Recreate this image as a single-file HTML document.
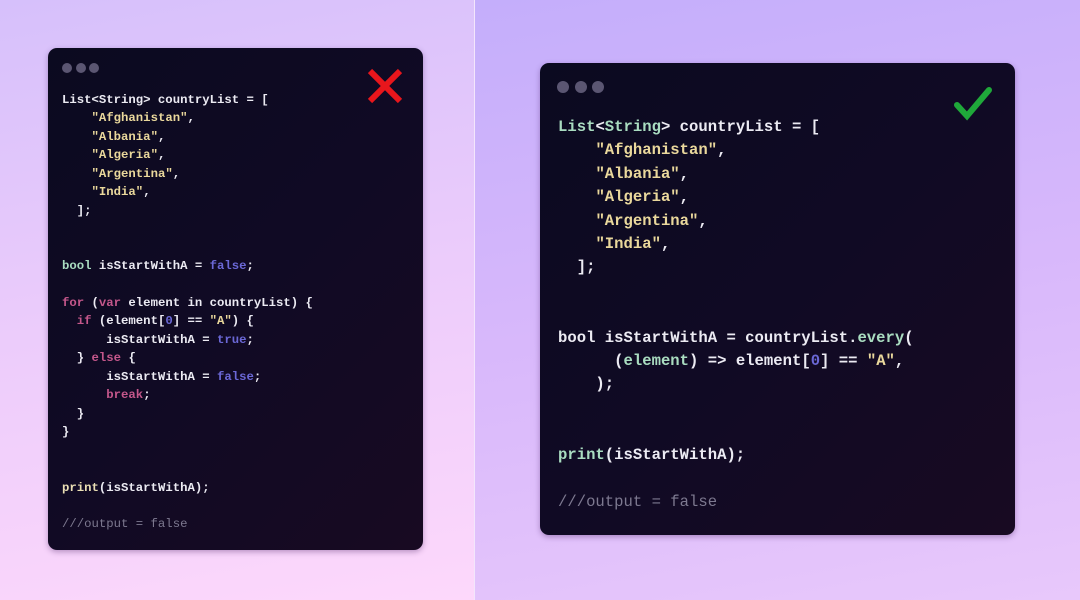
<!DOCTYPE html>
<html><head><style>
body{margin:0;width:1080px;height:600px;position:relative;overflow:hidden;font-family:"Liberation Mono",monospace}
.l{position:absolute;left:0;top:0;width:474px;height:600px;background:linear-gradient(170deg,#d6c0fb 0%,#ecccfb 50%,#fdd8fb 100%)}
.r{position:absolute;left:475px;top:0;width:605px;height:600px;background:linear-gradient(170deg,#c4aefb 0%,#d8b8fb 50%,#e8c8fb 100%)}
.div{position:absolute;left:474px;top:0;width:1px;height:600px;background:#f3e6fb}
.card{position:absolute;border-radius:9px;background:linear-gradient(135deg,#0b0a20 0%,#100a24 50%,#180a22 100%);box-shadow:0 2px 6px rgba(60,20,90,.35)}
.dot{position:absolute;border-radius:50%;background:#5b5672}
pre{margin:0;position:absolute;font-family:"Liberation Mono",monospace;color:#ecebf3;font-weight:bold}
.s{color:#ead89c}.k{color:#c4578b}.b{color:#6b68d6}.g{color:#a9dcc0}.p{color:#eadfb4}.c{color:#7d7990;font-weight:normal}.w{color:#ecebf3}
</style></head><body>
<div class="l"></div><div class="r"></div><div class="div"></div>
<div class="card" style="left:48px;top:48px;width:375px;height:502px">
<div class="dot" style="left:14px;top:15px;width:10px;height:10px"></div>
<div class="dot" style="left:28px;top:15px;width:10px;height:10px"></div>
<div class="dot" style="left:41px;top:15px;width:10px;height:10px"></div>
<svg style="position:absolute;left:318px;top:20px" width="38" height="36" viewBox="0 0 38 36"><path d="M4 3L34 33M34 3L4 33" stroke="#e8161c" stroke-width="6"/></svg>
<pre style="left:14px;top:43px;font-size:12.3px;line-height:18.45px">List&lt;String&gt; countryList = [
    <span class="s">"Afghanistan"</span>,
    <span class="s">"Albania"</span>,
    <span class="s">"Algeria"</span>,
    <span class="s">"Argentina"</span>,
    <span class="s">"India"</span>,
  ];


<span class="g">bool</span> isStartWithA = <span class="b">false</span>;

<span class="k">for</span> (<span class="k">var</span> element in countryList) {
  <span class="k">if</span> (element[<span class="b">0</span>] == <span class="s">"A"</span>) {
      isStartWithA = <span class="b">true</span>;
  } <span class="k">else</span> {
      isStartWithA = <span class="b">false</span>;
      <span class="k">break</span>;
  }
}


<span class="p">print</span>(isStartWithA);

<span class="c">///output = false</span></pre>
</div>
<div class="card" style="left:540px;top:63px;width:475px;height:472px">
<div class="dot" style="left:17px;top:18px;width:12px;height:12px"></div>
<div class="dot" style="left:35px;top:18px;width:12px;height:12px"></div>
<div class="dot" style="left:52px;top:18px;width:12px;height:12px"></div>
<svg style="position:absolute;left:412px;top:22px" width="42" height="38" viewBox="0 0 42 38"><path d="M5 20L15 31L37 5" stroke="#1fa83a" stroke-width="6" fill="none" stroke-linecap="round"/></svg>
<pre style="left:18px;top:53px;font-size:15.6px;line-height:23.4px"><span class="g">List</span>&lt;<span class="g">String</span>&gt; countryList = [
    <span class="s">"Afghanistan"</span>,
    <span class="s">"Albania"</span>,
    <span class="s">"Algeria"</span>,
    <span class="s">"Argentina"</span>,
    <span class="s">"India"</span>,
  ];


bool isStartWithA = countryList.<span class="g">every</span>(
      (<span class="g">element</span>) =&gt; element[<span class="b">0</span>] == <span class="s">"A"</span>,
    );


<span class="g">print</span>(isStartWithA);

<span class="c">///output = false</span></pre>
</div>
</body></html>
